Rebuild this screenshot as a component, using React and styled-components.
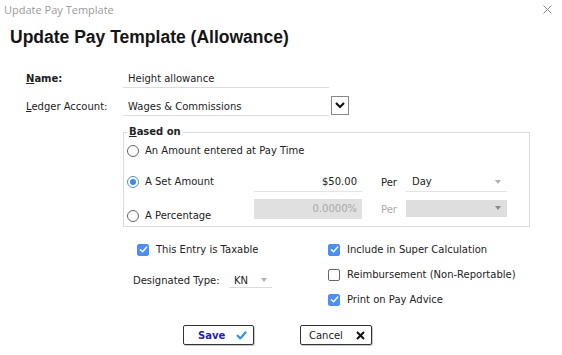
import React from 'react';
import styled, { createGlobalStyle } from 'styled-components';

const GlobalStyle = createGlobalStyle`
  html, body { margin: 0; padding: 0; background: #fff; }
  * { box-sizing: border-box; }
`;

const Window = styled.div`
  width: 562px;
  height: 355px;
  background: #fff;
  overflow: hidden;
  font-family: "DejaVu Sans", Verdana, sans-serif;
  font-size: 10px;
  color: #222;
`;

const TitleBar = styled.div`
  height: 18px;
  display: flex;
  align-items: center;
  justify-content: space-between;
  padding: 0 10px 0 4px;
  font-family: "Open Sans", sans-serif;
  font-size: 11px;
  color: #9a9a9a;
`;

const Heading = styled.h1`
  margin: 9px 0 0 10px;
  font-family: "Liberation Sans", Arial, sans-serif;
  font-weight: bold;
  font-size: 17.5px;
  line-height: 20px;
  color: #151515;
`;

const Form = styled.div`
  padding-left: 26px;
  margin-top: 21px;
`;

const FieldRow = styled.div`
  display: grid;
  grid-template-columns: 97px 206px auto;
  align-items: center;
  height: 20px;
  margin-top: ${(p) => p.$top || 0}px;
`;

const Label = styled.span`
  font-weight: ${(p) => (p.$bold ? 'bold' : 'normal')};
  color: #222;
  u { text-decoration: underline; }
`;

const TextField = styled.div`
  height: 20px;
  padding: 3px 5px 0;
  line-height: 16px;
  border-bottom: 1px solid #dcdcdc;
  color: #222;
`;

const DropButton = styled.div`
  width: 18px;
  height: 19px;
  margin-left: 2px;
  margin-top: -2px;
  border: 1px solid #888;
  display: flex;
  align-items: center;
  justify-content: center;
`;

const GroupBox = styled.fieldset`
  margin: 10px 0 0 97px;
  width: 407px;
  padding: 0 0 1px 3px;
  border: 1px solid #dcdcdc;
  min-width: 0;
`;

const Legend = styled.legend`
  padding: 0 2px;
  font-weight: bold;
  line-height: 12px;
  color: #222;
`;

const OptionRow = styled.div`
  display: grid;
  grid-template-columns: 127px 108px 44px 101px;
  height: ${(p) => p.$h || 20}px;
  margin-top: ${(p) => p.$top || 0}px;
  align-items: center;
`;

const RadioLabel = styled.label`
  display: flex;
  align-items: center;
  white-space: nowrap;
  line-height: 14px;
  grid-column: ${(p) => (p.$wide ? '1 / -1' : 'auto')};
  align-self: ${(p) => (p.$low ? 'end' : 'center')};
  margin-bottom: ${(p) => (p.$low ? 2 : 0)}px;
`;

const RadioDot = styled.span`
  width: 12px;
  height: 12px;
  border-radius: 50%;
  border: 1px solid ${(p) => (p.$on ? '#4a8ff0' : '#666')};
  margin-right: 6px;
  display: flex;
  align-items: center;
  justify-content: center;
  flex-shrink: 0;
  &::after {
    content: '';
    width: 6px;
    height: 6px;
    border-radius: 50%;
    background: ${(p) => (p.$on ? '#3d86f0' : 'transparent')};
  }
`;

const AmountField = styled.div`
  align-self: start;
  height: 20px;
  padding: 2px 5px 0;
  line-height: 16px;
  text-align: right;
  background: ${(p) => (p.$disabled ? '#e0e0e0' : '#fff')};
  border-bottom: 1px solid ${(p) => (p.$disabled ? '#e0e0e0' : '#e4e4e4')};
  color: ${(p) => (p.$disabled ? '#a8a8a8' : '#222')};
`;

const PerText = styled.span`
  padding-left: 19px;
  align-self: ${(p) => (p.$disabled ? 'start' : 'center')};
  margin-top: ${(p) => (p.$disabled ? 5 : 0)}px;
  color: ${(p) => (p.$disabled ? '#aaa' : '#222')};
`;

const Select = styled.div`
  align-self: start;
  height: ${(p) => (p.$disabled ? 17 : 20)}px;
  margin-top: ${(p) => (p.$disabled ? 1 : 0)}px;
  display: flex;
  align-items: center;
  justify-content: space-between;
  padding: 0 6px 0 6px;
  background: ${(p) => (p.$disabled ? '#dedede' : '#fff')};
  border-bottom: 1px solid ${(p) => (p.$disabled ? '#dedede' : '#e4e4e4')};
  color: #222;
`;

const Caret = styled.span`
  width: 0;
  height: 0;
  border-left: 3px solid transparent;
  border-right: 3px solid transparent;
  border-top: 4px solid ${(p) => (p.$dark ? '#8a8a8a' : '#b0b0b0')};
`;

const BottomArea = styled.div`
  display: grid;
  grid-template-columns: 195px auto;
  margin: 10px 0 0 107px;
`;

const Column = styled.div`
  display: flex;
  flex-direction: column;
`;

const CheckRow = styled.label`
  height: 25px;
  display: flex;
  align-items: center;
  white-space: nowrap;
  padding-left: ${(p) => p.$indent || 0}px;
  margin-top: ${(p) => p.$top || 0}px;
`;

const CheckBox = styled.span`
  width: 12px;
  height: 12px;
  border-radius: 2px;
  margin-right: 7px;
  flex-shrink: 0;
  display: flex;
  align-items: center;
  justify-content: center;
  background: ${(p) => (p.$on ? '#4a8ff5' : '#fff')};
  border: 1px solid ${(p) => (p.$on ? '#4a8ff5' : '#666')};
`;

const TypeSelect = styled.div`
  width: 43px;
  height: 15px;
  display: flex;
  align-items: center;
  justify-content: space-between;
  padding: 0 5px;
  border-bottom: 1px solid #dcdcdc;
`;

const TypeLabel = styled.span`
  width: 96px;
`;

const ButtonRow = styled.div`
  display: flex;
  gap: 46px;
  margin: 13px 0 0 157px;
`;

const Button = styled.div`
  width: ${(p) => p.$w}px;
  height: 20px;
  display: flex;
  align-items: center;
  justify-content: space-between;
  padding: 0 ${(p) => p.$pr}px 0 ${(p) => p.$pl}px;
  border: 1px solid #333;
  border-radius: 2px;
  box-shadow: 1px 1px 0 #c8c8c8;
  background: #fff;
  color: ${(p) => (p.$primary ? '#1c1cc8' : '#222')};
  font-weight: ${(p) => (p.$primary ? 'bold' : 'normal')};
`;

function Tick({ color = '#fff', size = 9, width = 1.6 }) {
  return (
    <svg width={size} height={size} viewBox="0 0 10 10">
      <path d="M1.5 5.2 L4 7.6 L8.6 2.2" fill="none" stroke={color} strokeWidth={width} strokeLinecap="round" strokeLinejoin="round" />
    </svg>
  );
}

function Check({ on, children }) {
  return (
    <>
      <CheckBox $on={on}>{on && <Tick />}</CheckBox>
      {children}
    </>
  );
}

export default function App() {
  return (
    <Window>
      <GlobalStyle />
      <TitleBar>
        <span>Update Pay Template</span>
        <svg width="9" height="9" viewBox="0 0 9 9">
          <path d="M0.5 0.5 L8.5 8.5 M8.5 0.5 L0.5 8.5" stroke="#8a8a8a" strokeWidth="1" />
        </svg>
      </TitleBar>
      <Heading>Update Pay Template (Allowance)</Heading>

      <Form>
        <FieldRow>
          <Label $bold><u>N</u>ame:</Label>
          <TextField>Height allowance</TextField>
        </FieldRow>
        <FieldRow $top={8}>
          <Label><u>L</u>edger Account:</Label>
          <TextField>Wages &amp; Commissions</TextField>
          <DropButton>
            <svg width="10" height="8" viewBox="0 0 10 8">
              <path d="M1 2 L5 6 L9 2" fill="none" stroke="#111" strokeWidth="2.2" />
            </svg>
          </DropButton>
        </FieldRow>

        <GroupBox>
          <Legend><u>B</u>ased on</Legend>
          <OptionRow $top={3}>
            <RadioLabel $wide><RadioDot />An Amount entered at Pay Time</RadioLabel>
          </OptionRow>
          <OptionRow $top={11}>
            <RadioLabel><RadioDot $on />A Set Amount</RadioLabel>
            <AmountField>$50.00</AmountField>
            <PerText>Per</PerText>
            <Select>
              <span>Day</span>
              <Caret />
            </Select>
          </OptionRow>
          <OptionRow $top={7} $h={26}>
            <RadioLabel $low><RadioDot />A Percentage</RadioLabel>
            <AmountField $disabled>0.0000%</AmountField>
            <PerText $disabled>Per</PerText>
            <Select $disabled>
              <span />
              <Caret $dark />
            </Select>
          </OptionRow>
        </GroupBox>

        <BottomArea>
          <Column>
            <CheckRow $indent={4}>
              <Check on>This Entry is Taxable</Check>
            </CheckRow>
            <CheckRow $top={6}>
              <TypeLabel>Designated Type:</TypeLabel>
              <TypeSelect>
                <span>KN</span>
                <Caret />
              </TypeSelect>
            </CheckRow>
          </Column>
          <Column>
            <CheckRow><Check on>Include in Super Calculation</Check></CheckRow>
            <CheckRow><Check>Reimbursement (Non-Reportable)</Check></CheckRow>
            <CheckRow><Check on>Print on Pay Advice</Check></CheckRow>
          </Column>
        </BottomArea>

        <ButtonRow>
          <Button $primary $w={71} $pl={14} $pr={6}>
            <span>Save</span>
            <Tick color="#2f8fe0" size={11} width={2} />
          </Button>
          <Button $w={72} $pl={8} $pr={6}>
            <span>Cancel</span>
            <svg width="9" height="9" viewBox="0 0 9 9">
              <path d="M1 1 L8 8 M8 1 L1 8" stroke="#111" strokeWidth="2" />
            </svg>
          </Button>
        </ButtonRow>
      </Form>
    </Window>
  );
}
